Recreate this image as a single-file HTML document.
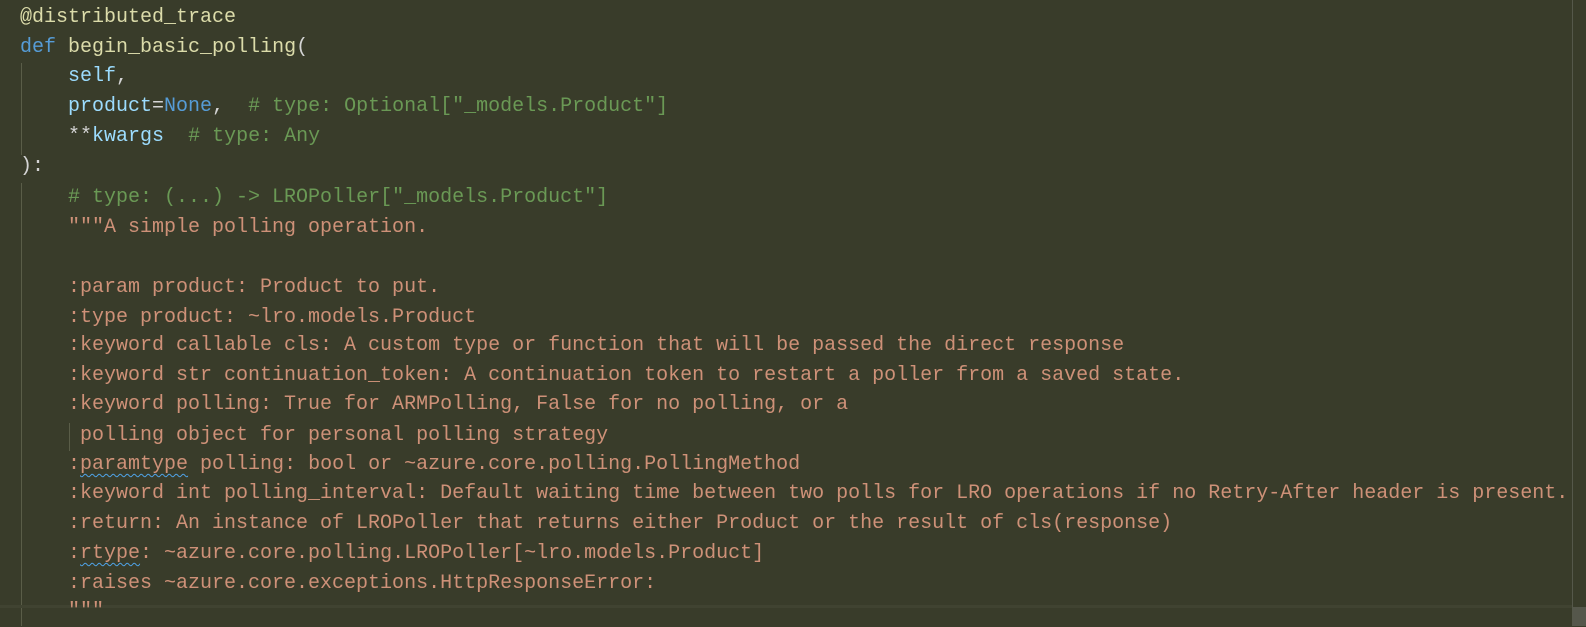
<!DOCTYPE html>
<html><head><meta charset="utf-8"><style>
html,body{margin:0;padding:0;}
body{width:1586px;height:626px;background:#393c2a;overflow:hidden;position:relative;
font-family:"Liberation Mono","DejaVu Sans Mono",monospace;font-size:20px;}
.l{position:absolute;left:20px;height:30px;line-height:30px;white-space:pre;color:#ce9178;}
.dec{color:#dcdcaa}.kw{color:#569cd6}.fn{color:#dcdcaa}.p{color:#9cdcfe}.c{color:#6a9955}.w{color:#d4d4d4}.s{color:#ce9178}
.sq{text-decoration:underline wavy #4fa3e8;text-decoration-thickness:1px;text-underline-offset:4px;}
.g{position:absolute;width:1px;background:#5a5d48;}
</style></head><body>
<div class="g" style="left:21px;top:63px;height:92px"></div>
<div class="g" style="left:21px;top:183px;height:443px"></div>
<div class="g" style="left:69px;top:423px;height:28px"></div>
<div style="position:absolute;left:0;top:605px;width:1572px;height:3px;background:#404331"></div>
<div style="position:absolute;left:1572px;top:0;width:1px;height:626px;background:#55584a"></div>
<div style="position:absolute;left:1573px;top:607px;width:13px;height:19px;background:#55574b"></div>
<div class="l dec" style="top:3px">@distributed_trace</div>
<div class="l" style="top:33px"><span class="kw">def</span> <span class="fn">begin_basic_polling</span><span class="w">(</span></div>
<div class="l" style="top:62px">    <span class="p">self</span><span class="w">,</span></div>
<div class="l" style="top:92px">    <span class="p">product</span><span class="w">=</span><span class="kw">None</span><span class="w">,</span>  <span class="c"># type: Optional["_models.Product"]</span></div>
<div class="l" style="top:122px">    <span class="w">**</span><span class="p">kwargs</span>  <span class="c"># type: Any</span></div>
<div class="l w" style="top:152px">):</div>
<div class="l" style="top:183px">    <span class="c"># type: (...) -&gt; LROPoller["_models.Product"]</span></div>
<div class="l" style="top:213px">    """A simple polling operation.</div>
<div class="l" style="top:273px">    :param product: Product to put.</div>
<div class="l" style="top:303px">    :type product: ~lro.models.Product</div>
<div class="l" style="top:331px">    :keyword callable cls: A custom type or function that will be passed the direct response</div>
<div class="l" style="top:361px">    :keyword str continuation_token: A continuation token to restart a poller from a saved state.</div>
<div class="l" style="top:390px">    :keyword polling: True for ARMPolling, False for no polling, or a</div>
<div class="l" style="top:421px">     polling object for personal polling strategy</div>
<div class="l" style="top:450px">    :<span class="sq">paramtype</span> polling: bool or ~azure.core.polling.PollingMethod</div>
<div class="l" style="top:479px">    :keyword int polling_interval: Default waiting time between two polls for LRO operations if no Retry-After header is present.</div>
<div class="l" style="top:509px">    :return: An instance of LROPoller that returns either Product or the result of cls(response)</div>
<div class="l" style="top:539px">    :<span class="sq">rtype</span>: ~azure.core.polling.LROPoller[~lro.models.Product]</div>
<div class="l" style="top:569px">    :raises ~azure.core.exceptions.HttpResponseError:</div>
<div class="l" style="top:597px">    """</div>
</body></html>
